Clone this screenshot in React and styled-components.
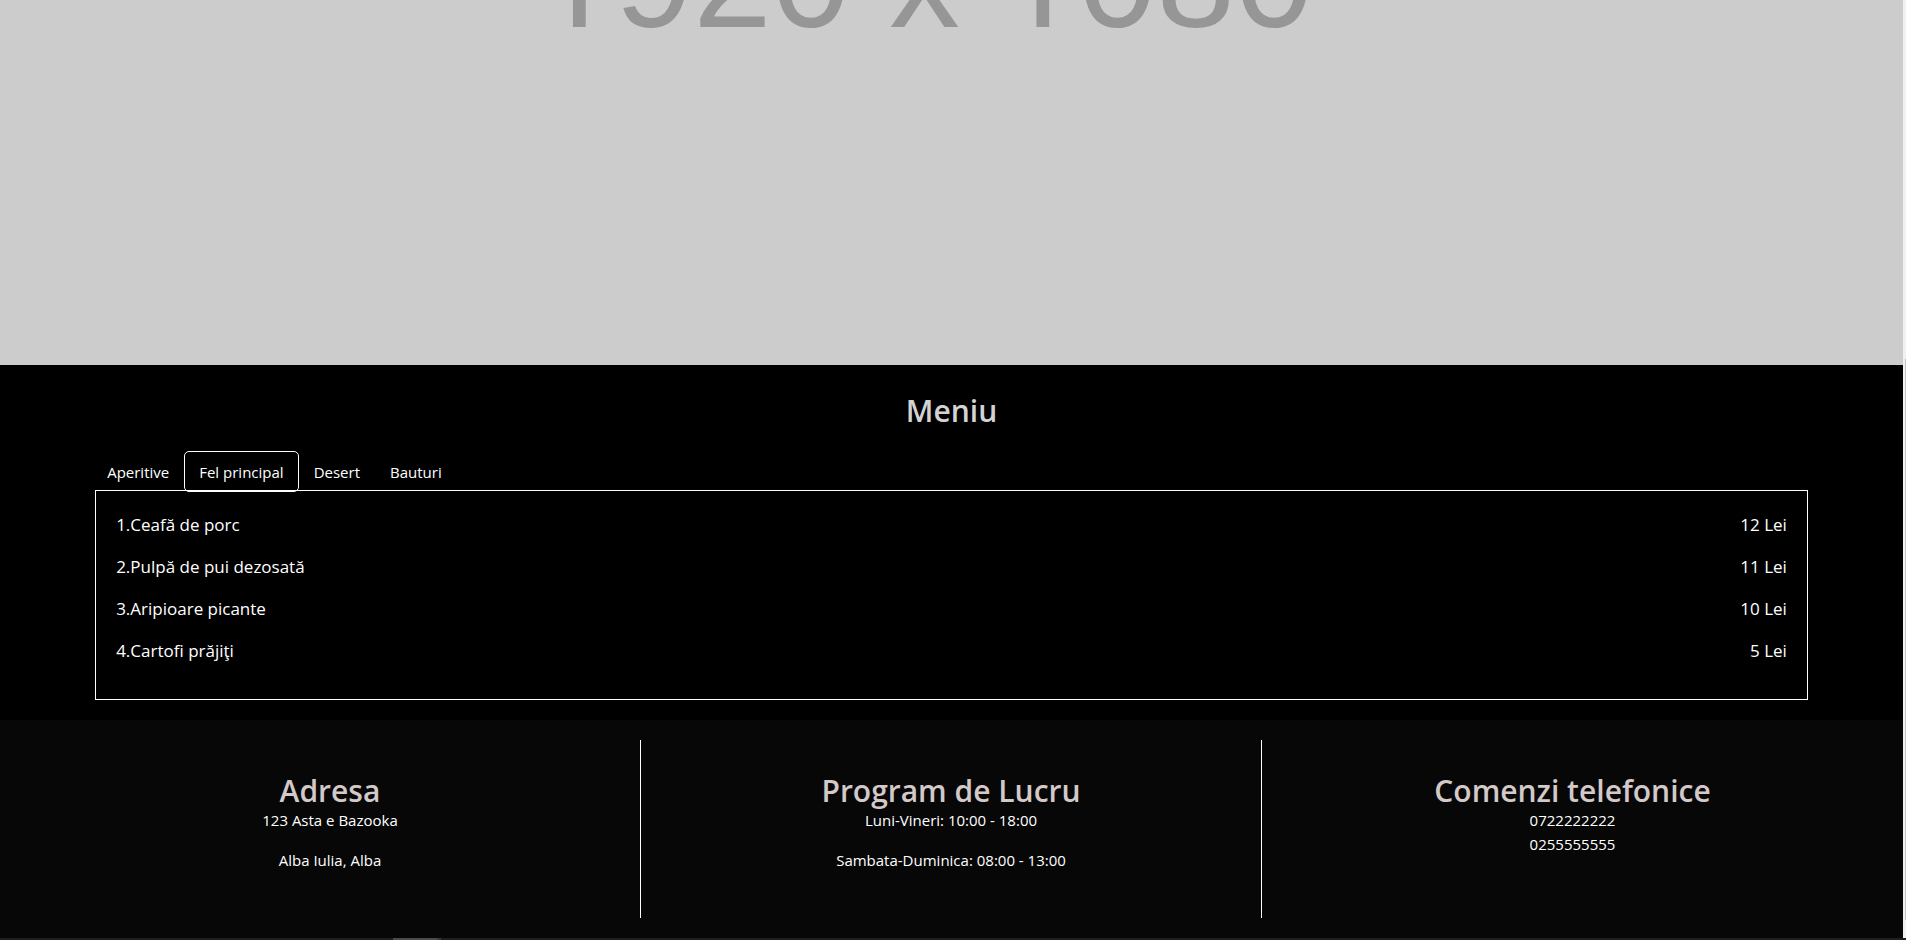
import React, { useState } from "react";
import styled, { createGlobalStyle } from "styled-components";

const GlobalStyle = createGlobalStyle`
  * { box-sizing: border-box; }
  body {
    margin: 0;
    background: #070707;
    color: #fff;
    font-family: "Segoe UI", "Open Sans", "Noto Sans", sans-serif;
    font-size: 15px;
    line-height: 24px;
  }
  h2, p, ul { margin: 0; padding: 0; }
`;

const Window = styled.div`
  display: flex;
  flex-direction: column;
  min-height: 100vh;
`;

const Viewport = styled.div`
  flex: 1;
  display: flex;
`;

const Page = styled.main`
  flex: 1;
  min-width: 0;
  display: flex;
  flex-direction: column;
`;

const ScrollTrack = styled.div`
  width: 3px;
  padding: 359px 0 18px 2px;
  background: #f1f1f1;
  display: flex;
`;

const ScrollThumb = styled.div`
  flex: 1;
  background: #c1c1c1;
`;

const Taskbar = styled.div`
  height: 3px;
  padding-left: 393px;
  background: #1e1e1e;
  display: flex;
`;

const TaskbarItem = styled.div`
  width: ${(p) => (p.$wide ? 44 : 4)}px;
  background: ${(p) => (p.$wide ? "#4a4a4a" : "#383838")};
`;

const Hero = styled.section`
  height: 365px;
  padding-right: 54px;
  overflow: hidden;
  background: #ccc;
  color: #969696;
  text-align: center;
`;

const HeroLabel = styled.p`
  && { margin-top: -92px; }
  font-family: "Liberation Sans", Arial, sans-serif;
  font-size: 141px;
  line-height: 140px;
  white-space: nowrap;
`;

/* the numeral one without a foot serif */
const PlainOne = styled.span`
  font-family: Roboto, sans-serif;
  line-height: 1px;
`;

const Heading = styled.h2`
  && { margin-bottom: -4px; }
  font-size: 30px;
  line-height: 42px;
  font-weight: 600;
  text-align: center;
  color: ${(p) => (p.$warm ? "#d3c9c9" : "#d3d3d3")};
`;

const MenuSection = styled.section`
  padding: 25px 5% 20px;
  background: #000;
`;

const Tabs = styled.div`
  display: flex;
  gap: 6px;
  padding: 26px 0 1px;
`;

const Tab = styled.button`
  height: 35px;
  padding: 0 12px;
  border: 0;
  border-radius: 2px;
  background: #000;
  color: inherit;
  font: inherit;
  font-size: 15px;
  cursor: pointer;
  outline: ${(p) => (p.$active ? "1px solid #fff" : "none")};
  outline-offset: 2px;
`;

const Panel = styled.ul`
  min-height: 210px;
  && { padding: 20px; }
  border: 1px solid #fff;
  list-style: none;
  display: flex;
  flex-direction: column;
  gap: 14px;
`;

const Dish = styled.li`
  display: flex;
  justify-content: space-between;
  font-size: 17px;
  line-height: 28px;
`;

const Footer = styled.footer`
  flex: 1;
  padding: 20px;
  background: #070707;
  display: grid;
  grid-template-columns: repeat(3, 1fr);
  align-items: start;
`;

const Column = styled.section`
  min-height: 178px;
  padding: 30px 0;
  border-right: ${(p) => (p.$last ? "0" : "1px solid #fff")};
  text-align: center;
`;

const Lines = styled.div`
  display: flex;
  flex-direction: column;
  gap: ${(p) => (p.$tight ? 0 : 16)}px;
`;

const menu = {
  Aperitive: [],
  "Fel principal": [
    ["Ceafă de porc", 12],
    ["Pulpă de pui dezosată", 11],
    ["Aripioare picante", 10],
    ["Cartofi prăjiţi", 5],
  ],
  Desert: [],
  Bauturi: [],
};

const columns = [
  { title: "Adresa", lines: ["123 Asta e Bazooka", "Alba Iulia, Alba"] },
  {
    title: "Program de Lucru",
    lines: ["Luni-Vineri: 10:00 - 18:00", "Sambata-Duminica: 08:00 - 13:00"],
  },
  {
    title: "Comenzi telefonice",
    lines: ["0722222222", "0255555555"],
    tight: true,
  },
];

export default function App() {
  const [active, setActive] = useState("Fel principal");
  return (
    <Window>
      <GlobalStyle />
      <Viewport>
        <Page>
          <Hero>
            <HeroLabel>
              <PlainOne>1</PlainOne>920 x <PlainOne>1</PlainOne>080
            </HeroLabel>
          </Hero>
          <MenuSection>
            <Heading>Meniu</Heading>
            <Tabs role="tablist">
              {Object.keys(menu).map((name) => (
                <Tab
                  key={name}
                  type="button"
                  role="tab"
                  aria-selected={name === active}
                  $active={name === active}
                  onClick={() => setActive(name)}
                >
                  {name}
                </Tab>
              ))}
            </Tabs>
            <Panel>
              {menu[active].map(([dish, price], i) => (
                <Dish key={dish}>
                  <span>{`${i + 1}.${dish}`}</span>
                  <span>{`${price} Lei`}</span>
                </Dish>
              ))}
            </Panel>
          </MenuSection>
          <Footer>
            {columns.map(({ title, lines, tight }, i) => (
              <Column key={title} $last={i === columns.length - 1}>
                <Heading $warm>{title}</Heading>
                <Lines $tight={tight}>
                  {lines.map((line) => (
                    <p key={line}>{line}</p>
                  ))}
                </Lines>
              </Column>
            ))}
          </Footer>
        </Page>
        <ScrollTrack>
          <ScrollThumb />
        </ScrollTrack>
      </Viewport>
      <Taskbar>
        <TaskbarItem $wide />
        <TaskbarItem />
      </Taskbar>
    </Window>
  );
}
